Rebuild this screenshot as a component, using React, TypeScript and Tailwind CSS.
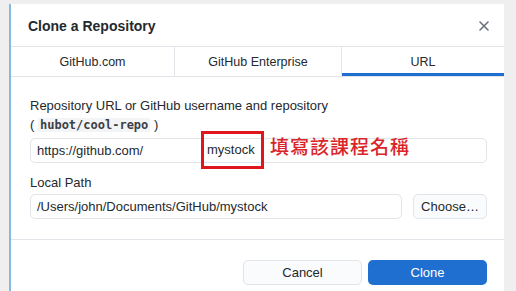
import React from "react";

export default function App() {
  const font = { fontFamily: '"Liberation Sans", Arial, "Noto Sans CJK TC", sans-serif' };
  return (
    <div className="w-[516px] h-[291px] bg-[#efefef] overflow-hidden relative" style={font}>
      <div className="absolute left-[9px] top-[4px] w-[495px] h-[300px] bg-white border-l-2 border-[#86b9dc] flex flex-col text-[#24292e]">
        <div className="h-[43px] flex items-center justify-between pl-[17px] pr-[12px] pt-[2px] border-b border-[#e1e4e8]">
          <span className="text-[14px] font-bold text-[#24292e]">Clone a Repository</span>
          <svg width="12" height="12" viewBox="0 0 12 12" className="mr-[2px]">
            <path d="M2 2 L10 10 M10 2 L2 10" stroke="#6a737d" strokeWidth="1.6" strokeLinecap="round" />
          </svg>
        </div>
        <div className="flex h-[30px] border-b border-[#e1e4e8] text-[12.5px] text-[#24292e]">
          <div className="w-[164px] flex items-center justify-center border-r border-[#e1e4e8] pt-[2px]">GitHub.com</div>
          <div className="w-[167px] flex items-center justify-center border-r border-[#e1e4e8] pt-[2px]">GitHub Enterprise</div>
          <div className="flex-1 flex items-center justify-center relative pt-[2px]">
            URL
            <div className="absolute left-0 right-0 bottom-0 h-[3px] bg-[#1f6fd0]" />
          </div>
        </div>
        <div className="pl-[19px] pr-[17px] pt-[20px]">
          <div className="text-[13px] leading-[18px] text-[#24292e]">Repository URL or GitHub username and repository</div>
          <div className="text-[13px] leading-[18px] mt-[1px] text-[#24292e]">
            ( <span className="bg-[#f3f4f6] px-[2px] text-[12px] font-semibold text-[#3b4046]" style={{ fontFamily: '"DejaVu Sans Mono", monospace' }}>hubot/cool-repo</span> )
          </div>
          <div className="relative mt-[4px] h-[25px] border border-[#e1e4e8] rounded-[5px] flex items-center pl-[6px] text-[13px]">
            <span>https://github.com/</span>
            <div className="absolute left-[170px] top-[-8px] w-[63px] h-[38px] border-[3px] border-[#e0161e] flex items-center pl-[3px]">
              <span className="text-[13px]">mystock</span>
            </div>
            <span className="absolute left-[239px] top-[-7px] text-[19px] font-medium text-[#d9252a] tracking-[1px]" style={{ fontFamily: '"Noto Sans CJK TC", sans-serif' }}>填寫該課程名稱</span>
          </div>
          <div className="text-[13px] mt-[11px] leading-[18px]">Local Path</div>
          <div className="flex gap-[11px] mt-[2px]">
            <div className="w-[372px] h-[25px] border border-[#e1e4e8] rounded-[5px] flex items-center pl-[6px] text-[13px]">/Users/john/Documents/GitHub/mystock</div>
            <div className="w-[74px] h-[25px] border border-[#e1e4e8] rounded-[5px] bg-[#fafbfc] flex items-center justify-center text-[13px]">Choose…</div>
          </div>
        </div>
        <div className="mt-[20px] border-t border-[#e1e4e8] flex justify-end gap-[6px] pr-[17px] pt-[20px]">
          <div className="w-[119px] h-[25px] border border-[#e1e4e8] rounded-[5px] bg-[#fafbfc] flex items-center justify-center text-[13px]">Cancel</div>
          <div className="w-[119px] h-[25px] rounded-[5px] bg-[#1f6fd0] text-white flex items-center justify-center text-[13px]">Clone</div>
        </div>
      </div>
    </div>
  );
}
